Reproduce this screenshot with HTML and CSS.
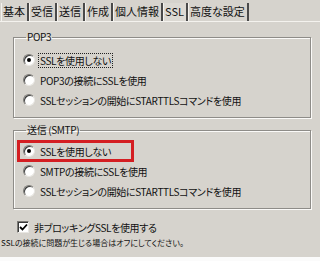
FILE: index.html
```html
<!DOCTYPE html>
<html lang="ja">
<head>
  <meta charset="UTF-8" />
  <title>SSL設定</title>
  <link rel="stylesheet" href="styles.css">
</head>
<body>
  <div class="window">
    <div class="tabs">
      <span class="tab">基本</span>
      <span class="tab">受信</span>
      <span class="tab">送信</span>
      <span class="tab">作成</span>
      <span class="tab">個人情報</span>
      <span class="tab active">SSL</span>
      <span class="tab">高度な設定</span>
    </div>

    <div class="panel">
      <fieldset class="group pop3">
        <legend>POP3</legend>
        <div class="row"><span class="radio checked"></span><span class="focus">SSLを使用しない</span></div>
        <div class="row"><span class="radio"></span><span>POP3の接続にSSLを使用</span></div>
        <div class="row"><span class="radio"></span><span>SSLセッションの開始にSTARTTLSコマンドを使用</span></div>
      </fieldset>

      <fieldset class="group smtp">
        <legend>送信 (SMTP)</legend>
        <div class="row"><span class="radio checked"></span><span>SSLを使用しない</span><span class="mark"></span></div>
        <div class="row"><span class="radio"></span><span>SMTPの接続にSSLを使用</span></div>
        <div class="row"><span class="radio"></span><span>SSLセッションの開始にSTARTTLSコマンドを使用</span></div>
      </fieldset>

      <div class="check-row">
        <span class="checkbox">
          <svg width="9" height="9" viewBox="0 0 9 9"><path d="M1 4 L3.5 6.5 L8 1.5" fill="none" stroke="#000" stroke-width="1.8"/></svg>
        </span>
        <span>非ブロッキングSSLを使用する</span>
      </div>
      <p class="note">SSLの接続に問題が生じる場合はオフにしてください。</p>
    </div>
  </div>
</body>
</html>
```

FILE: styles.css
```css
html, body {
  margin: 0;
  background: #fbfbfb;
}
body {
  font-family: "Noto Sans CJK JP", "Liberation Sans", sans-serif;
  font-size: 10px;
  font-feature-settings: "palt";
  letter-spacing: -0.35px;
  color: #111;
}
.window {
  height: 257px;
  background: #d6d3cd;
  overflow: hidden;
}
.tabs {
  display: flex;
  padding: 3px 0 0 1px;
  height: 18px;
}
.tab {
  font-size: 11px;
  line-height: 17px;
  letter-spacing: 0;
  padding: 0 2px 0 1px;
  border-left: 1px solid #f4f2ee;
  border-right: 2px solid #4a4a4a;
}
.tab.active {
  background: #dcd9d3;
}
.panel {
  border-top: 1px solid #f4f2ee;
  padding-top: 8px;
}
.group {
  margin: 0 9px 0 13px;
  border: 1px solid #8e8c88;
  box-shadow: inset 1px 1px 0 #fbfaf8, 1px 1px 0 #fbfaf8;
  padding: 6px 0 7px 9px;
}
.group legend {
  padding: 0 1px;
  margin-left: 3px;
  line-height: 14px;
}
.smtp {
  margin-top: 5px;
  padding-top: 4px;
}
.row {
  display: flex;
  align-items: center;
  gap: 5px;
  height: 20px;
  position: relative;
}
.radio {
  flex: none;
  width: 10px;
  height: 10px;
  border-radius: 50%;
  background: #fff;
  border: 1px solid;
  border-color: #7c7a76 #e8e6e2 #e8e6e2 #7c7a76;
  box-shadow: inset 1px 1px 0 #3a3a3a;
  display: flex;
  align-items: center;
  justify-content: center;
}
.radio.checked::after {
  content: "";
  width: 4px;
  height: 4px;
  border-radius: 50%;
  background: #000;
}
.focus {
  border: 1px dotted #222;
  padding: 0 1px;
  margin-left: -2px;
  line-height: 13px;
}
.mark {
  position: absolute;
  left: -6px;
  top: -1px;
  width: 111px;
  height: 16px;
  border: 3px solid #d41e22;
}
.check-row {
  display: flex;
  align-items: center;
  gap: 5px;
  margin: 10px 0 0 17px;
  height: 16px;
}
.checkbox {
  flex: none;
  width: 10px;
  height: 10px;
  background: #fff;
  border: 1px solid;
  border-color: #7c7a76 #e8e6e2 #e8e6e2 #7c7a76;
  box-shadow: inset 1px 1px 0 #3a3a3a;
  display: flex;
  align-items: center;
  justify-content: center;
}
.note {
  margin: 2px 0 0 1px;
  font-size: 8px;
  line-height: 12px;
  letter-spacing: 0;
}
```
